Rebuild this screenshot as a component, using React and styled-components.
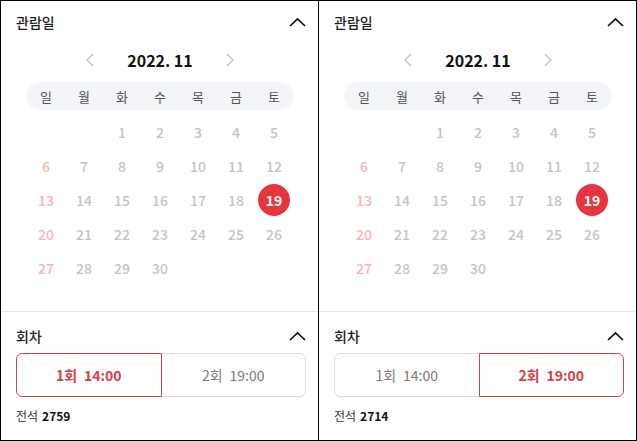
import React from 'react'
import styled, { createGlobalStyle } from 'styled-components'

const GlobalStyle = createGlobalStyle`
  html, body { margin: 0; padding: 0; background: #fff; }
  body { font-family: "Noto Sans CJK KR", "Noto Sans", sans-serif; }
  * { box-sizing: border-box; }
`

const Frame = styled.div`
  display: flex;
  width: 637px;
  height: 441px;
  border: 1px solid #000;
  background: #fff;
`

const Panel = styled.div`
  flex: 1;
  display: flex;
  flex-direction: column;
  & + & { border-left: 1px solid #000; }
`

const Section = styled.div`
  padding: ${p => p.$top || 0}px 12px ${p => p.$bottom || 0}px 15px;
  & + & { border-top: 1px solid #e3e3e3; }
`

const Head = styled.div`
  display: flex;
  align-items: center;
  justify-content: space-between;
  height: ${p => p.$h}px;
`

const Title = styled.div`
  font-size: 14px;
  font-weight: 500;
  color: #1e1e1e;
`

const MonthNav = styled.div`
  display: flex;
  align-items: center;
  justify-content: center;
  height: 24px;
  margin-top: 5px;
  padding-right: 2px;
`

const Arrow = styled.div`
  width: 20px;
  display: flex;
  justify-content: center;
`

const Month = styled.div`
  width: 120px;
  text-align: center;
  font-size: 16px;
  font-weight: 700;
  color: #111;
`

const WeekBar = styled.div`
  display: grid;
  grid-template-columns: repeat(7, 38px);
  width: 268px;
  height: 28px;
  margin: 10px 0 0 10px;
  padding: 0 1px;
  border-radius: 14px;
  background: #f4f5f9;
  align-items: center;
`

const WeekDay = styled.div`
  text-align: center;
  font-size: 13px;
  color: #555;
`

const Days = styled.div`
  display: grid;
  grid-template-columns: repeat(7, 38px);
  grid-auto-rows: 34px;
  width: 266px;
  margin: 5px 0 0 11px;
`

const Day = styled.div`
  display: flex;
  align-items: center;
  justify-content: center;
  font-size: 14px;
  font-weight: 500;
  color: ${p => (p.$sun ? '#f2b5ba' : '#c4c4c4')};
`

const Selected = styled.span`
  width: 32px;
  height: 32px;
  border-radius: 50%;
  background: #e5353f;
  color: #fff;
  font-weight: 700;
  display: flex;
  align-items: center;
  justify-content: center;
`

const Rounds = styled.div`
  display: flex;
  height: 44px;
  margin-top: 5px;
`

const Round = styled.div`
  flex: 1;
  display: flex;
  align-items: center;
  justify-content: center;
  font-size: 14px;
  border: 1px solid ${p => (p.$on ? '#c9474f' : '#dcdcdc')};
  color: ${p => (p.$on ? '#d5404a' : '#7a7a7a')};
  font-weight: ${p => (p.$on ? 700 : 400)};
  position: relative;
  z-index: ${p => (p.$on ? 1 : 0)};
  &:first-child { border-radius: 6px 0 0 6px; }
  &:last-child { border-radius: 0 6px 6px 0; margin-left: -1px; }
`

const Time = styled.span`
  margin-left: 7px;
`

const Seats = styled.div`
  margin-top: 10px;
  height: 18px;
  line-height: 18px;
  font-size: 12px;
  color: #333;
  b { font-weight: 700; color: #111; margin-left: 4px; }
`

const ChevronUp = () => (
  <svg width="17" height="10" viewBox="0 0 17 10">
    <polyline points="1,9 8.5,2 16,9" fill="none" stroke="#111" strokeWidth="1.7" />
  </svg>
)

const Chev = ({ dir }) => (
  <svg width="8" height="14" viewBox="0 0 8 14">
    <polyline
      points={dir === 'left' ? '7,1 1,7 7,13' : '1,1 7,7 1,13'}
      fill="none"
      stroke="#bdbdbd"
      strokeWidth="1.2"
    />
  </svg>
)

const weekdays = ['일', '월', '화', '수', '목', '금', '토']
const cells = [null, null, ...Array.from({ length: 30 }, (_, i) => i + 1)]

const Booking = ({ selectedRound, seats }) => (
  <Panel>
    <Section $bottom={26}>
      <Head $h={42}>
        <Title>관람일</Title>
        <ChevronUp />
      </Head>
      <MonthNav>
        <Arrow><Chev dir="left" /></Arrow>
        <Month>2022. 11</Month>
        <Arrow><Chev dir="right" /></Arrow>
      </MonthNav>
      <WeekBar>
        {weekdays.map(w => <WeekDay key={w}>{w}</WeekDay>)}
      </WeekBar>
      <Days>
        {cells.map((d, idx) => (
          <Day key={idx} $sun={idx % 7 === 0}>
            {d === 19 ? <Selected>{d}</Selected> : d}
          </Day>
        ))}
      </Days>
    </Section>
    <Section $top={12}>
      <Head $h={24}>
        <Title>회차</Title>
        <ChevronUp />
      </Head>
      <Rounds>
        <Round $on={selectedRound === 1}>1회<Time>14:00</Time></Round>
        <Round $on={selectedRound === 2}>2회<Time>19:00</Time></Round>
      </Rounds>
      <Seats>전석<b>{seats}</b></Seats>
    </Section>
  </Panel>
)

const App = () => (
  <>
    <GlobalStyle />
    <Frame>
      <Booking selectedRound={1} seats={2759} />
      <Booking selectedRound={2} seats={2714} />
    </Frame>
  </>
)

export default App
